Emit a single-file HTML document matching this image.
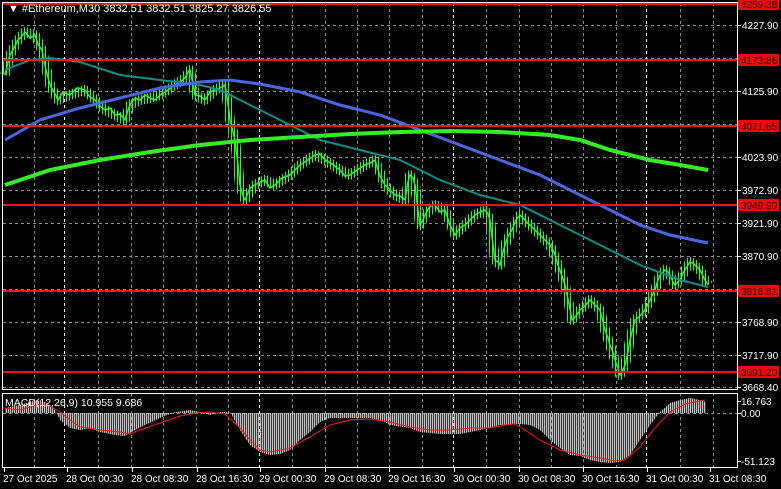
<!DOCTYPE html>
<html><head><meta charset="utf-8"><style>
html,body{margin:0;padding:0;background:#000;width:781px;height:489px;overflow:hidden}
svg{display:block}
text{font-family:"Liberation Sans",sans-serif;font-size:10px;fill:#fff}
.r{fill:#000}
</style></head><body>
<svg width="781" height="489" xmlns="http://www.w3.org/2000/svg">
<defs>
<pattern id="vp" x="0" y="0" width="3" height="4" patternUnits="userSpaceOnUse"><rect x="0" y="0" width="1" height="4" fill="#22ff22"/></pattern>
<pattern id="hp" x="0" y="0" width="2" height="4" patternUnits="userSpaceOnUse"><rect x="0" y="0" width="1.3" height="4" fill="#c0c0c0"/></pattern>
</defs>
<rect width="781" height="489" fill="#000"/>
<g stroke="#8a8a8a" stroke-dasharray="3,3" stroke-width="1">
<path d="M34.5 3V467M98.5 3V467M131.5 3V467M163.5 3V467M196.5 3V467M228.5 3V467M292.5 3V467M325.5 3V467M357.5 3V467M389.5 3V467M422.5 3V467M486.5 3V467M519.5 3V467M551.5 3V467M583.5 3V467M616.5 3V467M680.5 3V467M713.5 3V467"/>
<path d="M3 25.5H737M3 58.5H737M3 91.5H737M3 124.5H737M3 157.5H737M3 190.5H737M3 223.5H737M3 256.5H737M3 289.5H737M3 322.5H737M3 355.5H737M3 387.5H737M3 413.5H737"/>
</g>
<path d="M64.5 3V467M259.5 3V467M453.5 3V467M646.5 3V467" stroke="#fff" stroke-dasharray="3,3"/>
<polyline fill="none" stroke="url(#vp)" stroke-width="10" stroke-linejoin="round" points="5,75 10,55 18,40 25,32 35,35 42,50 50,85 58,100 70,95 85,90 95,100 105,110 115,115 125,120 130,105 140,100 150,98 160,95 175,85 185,78 190,70 195,95 205,100 215,90 225,85 230,120 235,140 240,185 245,200 255,185 265,180 275,185 290,175 300,165 315,155 325,160 340,170 350,175 365,165 375,160 385,185 395,195 405,200 410,175 415,185 420,225 425,215 435,205 445,210 455,235 465,225 475,215 485,210 490,220 495,260 500,265 505,245 512,230 520,215 530,225 540,235 550,245 558,265 565,285 572,320 580,310 590,300 600,310 605,330 610,345 615,360 620,375 625,365 630,340 635,320 645,310 655,290 660,275 665,270 670,275 675,285 680,280 685,270 690,262 695,265 700,270 705,280 708,285"/>
<polyline fill="none" stroke="#22ff22" stroke-width="1.5" points="5,75 8,62 10,55 14,48 18,40 22,36 25,32 30,38 35,35 38,44 42,50 46,70 50,85 54,92 58,100 63,92 70,95 77,88 85,90 90,97 95,100 100,106 105,110 110,108 115,115 120,114 125,120 128,110 130,105 135,98 140,100 145,95 150,98 155,100 160,95 168,90 175,85 180,82 185,78 188,72 190,70 193,84 195,95 200,96 205,100 210,92 215,90 220,88 225,85 228,104 230,120 233,132 235,140 238,165 240,185 243,196 245,200 250,188 255,185 260,182 265,180 270,188 275,185 282,178 290,175 295,170 300,165 308,160 315,155 320,154 325,160 332,164 340,170 345,176 350,175 357,170 365,165 370,163 375,160 380,176 385,185 390,190 395,195 400,196 405,200 408,182 410,175 413,178 415,185 418,210 420,225 423,220 425,215 430,206 435,205 440,212 445,210 450,225 455,235 460,228 465,225 470,220 475,215 480,212 485,210 488,214 490,220 493,245 495,260 498,262 500,265 503,252 505,245 508,236 512,230 516,220 520,215 525,220 530,225 535,230 540,235 545,240 550,245 554,252 558,265 562,276 565,285 569,304 572,320 576,316 580,310 585,306 590,300 595,305 600,310 603,322 605,330 608,338 610,345 613,352 615,360 618,368 620,375 623,370 625,365 628,352 630,340 633,328 635,320 640,316 645,310 650,300 655,290 658,280 660,275 663,272 665,270 668,272 670,275 673,282 675,285 678,282 680,280 683,273 685,270 688,265 690,262 693,263 695,265 698,268 700,270 703,276 705,280 708,285"/>
<polyline fill="none" stroke="#0a8f8a" stroke-width="2" points="5,70 30,60 50,58 80,62 120,75 160,80 200,85 220,90 250,105 280,120 320,140 360,150 400,160 440,180 480,195 520,205 560,225 600,245 640,265 680,280 708,287"/>
<polyline fill="none" stroke="#4a66e0" stroke-width="3" points="5,140 40,120 80,108 120,98 160,88 200,82 230,80 260,84 300,92 340,105 380,115 420,130 460,145 500,160 540,175 580,195 610,210 640,225 670,235 708,243"/>
<polyline fill="none" stroke="#33ee22" stroke-width="4" points="5,185 50,170 100,160 150,152 200,145 250,140 300,137 350,134 400,132 450,131 500,132 550,135 580,140 610,150 650,160 680,165 708,170"/>
<path d="M3 4H737M3 60H737M3 126H737M3 205H737M3 291H737M3 372H737" stroke="#ff1010" stroke-width="2"/>
<polygon fill="url(#hp)" points="5,413 5,408 20,405 35,400 45,402 55,410 60,420 70,428 80,430 90,428 100,432 115,435 125,436 135,430 145,425 160,418 175,412 190,410 200,412 210,415 220,412 230,412 240,430 250,445 260,452 270,455 280,454 290,450 300,440 310,432 320,422 330,418 350,418 370,418 380,420 390,425 410,428 420,432 440,434 460,434 480,430 500,425 520,424 530,425 540,430 550,440 560,448 570,455 580,456 590,460 600,462 610,463 620,462 630,455 640,440 650,425 660,412 670,403 680,400 690,398 700,400 706,402 706,413"/>
<polyline fill="none" stroke="#ff1010" stroke-width="1" points="3,408 20,410 40,404 50,406 60,412 70,420 80,427 100,430 120,432 130,434 140,430 160,423 180,416 195,413 210,412 225,414 240,428 250,440 260,450 270,452 290,448 310,437 330,425 350,420 370,419 390,422 410,427 430,430 450,430 470,428 490,428 505,425 515,424 525,430 540,440 560,450 580,455 600,458 615,461 625,460 640,447 655,428 670,412 685,404 705,400"/>
<g stroke="#fff" stroke-width="1" fill="none">
<rect x="2.5" y="2.5" width="735" height="387"/>
<rect x="2.5" y="393.5" width="735" height="74"/>
<path d="M737 25.5h4M737 91.5h4M737 157.5h4M737 190.5h4M737 223.5h4M737 256.5h4M737 322.5h4M737 355.5h4M737 387.5h4M737 401.5h4M737 413.5h4M737 461.5h4"/>
<path d="M4.5 468v4M67.5 468v4M132.5 468v4M197.5 468v4M260.5 468v4M325.5 468v4M389.5 468v4M454.5 468v4M519.5 468v4M583.5 468v4M647.5 468v4M710.5 468v4"/>
</g>
<g>
<text x="742" y="29">4227.90</text>
<text x="742" y="95">4125.90</text>
<text x="742" y="161">4023.90</text>
<text x="742" y="194">3972.90</text>
<text x="742" y="227">3921.90</text>
<text x="742" y="260">3870.90</text>
<text x="742" y="326">3768.90</text>
<text x="742" y="359">3717.90</text>
<text x="742" y="391">3668.40</text>
<rect x="738" y="-2" width="41" height="12" fill="#f00"/><text class="r" x="741" y="8">4259.38</text>
<rect x="738" y="54" width="41" height="12" fill="#f00"/><text class="r" x="741" y="64">4173.86</text>
<rect x="738" y="120" width="41" height="12" fill="#f00"/><text class="r" x="741" y="130">4071.65</text>
<rect x="738" y="199" width="41" height="12" fill="#f00"/><text class="r" x="741" y="209">3949.90</text>
<rect x="738" y="285" width="41" height="12" fill="#f00"/><text class="r" x="741" y="295">3816.61</text>
<rect x="738" y="366" width="41" height="12" fill="#f00"/><text class="r" x="741" y="376">3691.20</text>
</g>
<text x="8" y="12" style="font-size:11px">▼  #Ethereum,M30  3832.51 3832.51 3825.27 3826.55</text>
<text x="5" y="406" style="font-size:10.5px">MACD(12,26,9) 10.955 9.686</text>
<text x="741" y="405">16.763</text>
<text x="741" y="417">0.00</text>
<text x="741" y="465">-51.123</text>
<text x="3" y="482">27 Oct 2025</text>
<text x="66" y="482">28 Oct 00:30</text>
<text x="131" y="482">28 Oct 08:30</text>
<text x="196" y="482">28 Oct 16:30</text>
<text x="259" y="482">29 Oct 00:30</text>
<text x="324" y="482">29 Oct 08:30</text>
<text x="388" y="482">29 Oct 16:30</text>
<text x="453" y="482">30 Oct 00:30</text>
<text x="518" y="482">30 Oct 08:30</text>
<text x="582" y="482">30 Oct 16:30</text>
<text x="646" y="482">31 Oct 00:30</text>
<text x="709" y="482">31 Oct 08:30</text>
</svg>
</body></html>
